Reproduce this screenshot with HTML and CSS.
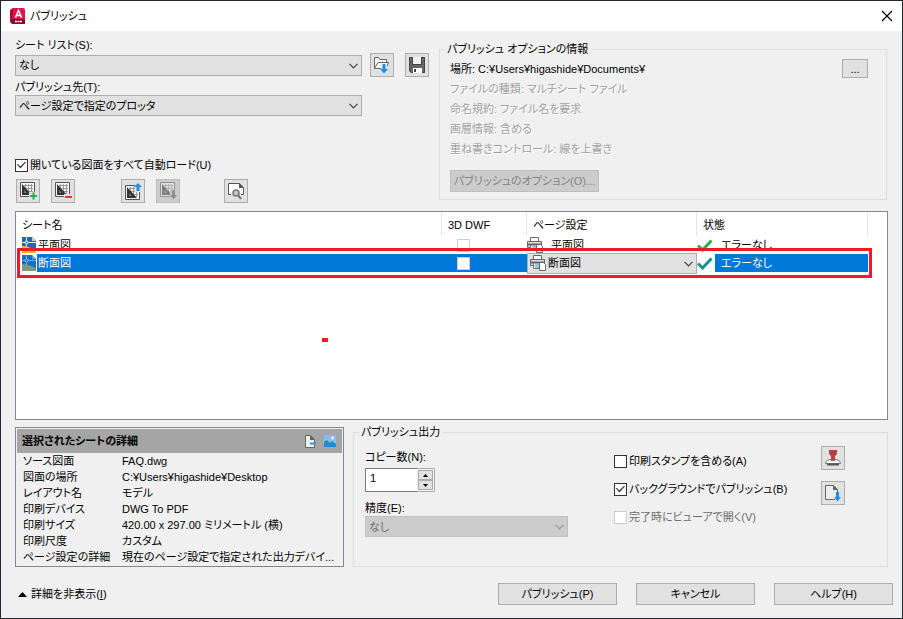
FILE: index.html
```html
<!DOCTYPE html>
<html lang="ja">
<head>
    <meta charset="UTF-8">
    <meta name="viewport" content="width=device-width, initial-scale=1.0">
    <title>パブリッシュ</title>
    <link rel="stylesheet" href="styles.css">
</head>
<body>
    <!-- 共通アイコン -->
    <svg class="symbols" aria-hidden="true">
        <symbol id="chevron" viewBox="0 0 9 6">
            <path d="M0.5 0.8L4.5 4.8L8.5 0.8" fill="none" stroke="currentColor" stroke-width="1.2"/>
        </symbol>
        <symbol id="sheet" viewBox="0 0 15 15">
            <path d="M.5 .5h14v14H.5z" fill="#f4f4f4" stroke="#555"/>
            <path d="M5.500 2v7M8.500 2v10M11.500 2v10M4 3.500h9M5 6.500h8M8 9.500h5" stroke="#999"/>
            <path d="M2 2l10 11H2z" fill="#333"/>
            <path d="M4 8l3 3H4z" fill="#777"/>
        </symbol>
        <symbol id="dwg" viewBox="0 0 14 16">
            <path d="M0 0h10l4 4v12H0z" fill="#2d66a8"/>
            <path d="M10 0v4h4z" fill="#b9cfe6"/>
            <path d="M0 9c5 0 9 2 14 4v3H0z" fill="#f5b81c"/>
            <path d="M4.500 0v10M0 5.500h14" stroke="#d5e7f7" stroke-width="1"/>
            <circle cx="4.500" cy="5.500" r="1.500" fill="#2d66a8" stroke="#fff"/>
        </symbol>
        <symbol id="dwg-selected" viewBox="0 0 14 16">
            <path d="M0 0h10l4 4v12H0z" fill="#176fc1"/>
            <path d="M10 0v4h4z" fill="#5da7e2"/>
            <path d="M0 9c5 0 9 2 14 4v3H0z" fill="#7b9a7d"/>
            <path d="M4.500 0v10M0 5.500h14" stroke="#6bb0ea" stroke-width="1"/>
            <circle cx="4.500" cy="5.500" r="1.500" fill="#176fc1" stroke="#7fbdf0"/>
        </symbol>
        <symbol id="printer" viewBox="0 0 16 16">
            <path d="M3.500 4.500v-4h8v4" fill="#fff" stroke="#666"/>
            <path d="M.5 4.500h14v6H.5z" fill="#ddd" stroke="#666"/>
            <path d="M1 7.500h13" stroke="#666" stroke-width="2"/>
            <path d="M3.500 8v5.500h6" fill="#fff" stroke="#777"/>
            <path d="M5 9h4v4H5z" fill="#8cc6f2"/>
            <path d="M9.500 7.500h4l2 2v6h-6z" fill="#fff" stroke="#666"/>
        </symbol>
        <symbol id="check" viewBox="0 0 16 13">
            <path d="M1 6.500L5.500 11L14.500 1.500" fill="none" stroke="currentColor" stroke-width="3"/>
        </symbol>
    </svg>

    <div class="dialog">
        <div class="title-bar">
            <svg class="app-icon" width="15" height="16" viewBox="0 0 15 16">
                <path d="M3 0h10a2 2 0 0 1 2 2v14H2V1z" fill="#e3124b"/>
                <path d="M3 0L0 2v12l2 2z" fill="#a10c38"/>
                <path d="M2 11h13v5H2z" fill="#7d0f31"/>
                <path d="M5.500 9.500L8.500 2.500L11.500 9.500M6.500 7.500h4" fill="none" stroke="#fff" stroke-width="1.600"/>
                <path d="M5 13.500h7" stroke="#fff" stroke-width="1.500" stroke-dasharray="2 .5"/>
            </svg>
            <h1>パブリッシュ</h1>
            <button class="close" aria-label="閉じる">
                <svg width="12" height="12" viewBox="0 0 12 12"><path d="M1 1l10 10M11 1L1 11" stroke="#000" stroke-width="1.200"/></svg>
            </button>
        </div>

        <div class="content">
            <div class="top">
                <div class="source">
                    <label class="label" for="sheetList">シート リスト(S):</label>
                    <div class="list-row">
                        <div class="select">
                            <select id="sheetList"><option>なし</option></select>
                            <svg class="arrow"><use href="#chevron"/></svg>
                        </div>
                        <button class="icon-button" aria-label="シート リストをロード">
                            <svg width="18" height="18" viewBox="0 0 18 18">
                                <path d="M1.500 12.500v-11h4l1.500 2h6.500v3" fill="#f5f5f5" stroke="#666"/>
                                <path d="M1.500 12.500L5 6.500h10.500l-2 6z" fill="#f5f5f5" stroke="#666"/>
                                <path d="M8 10h9v8H8z" fill="#e1e1e1"/>
                                <path d="M9.500 8h3v5h2.500l-4 4.500l-4-4.500h2.500z" fill="#1d8fea"/>
                            </svg>
                        </button>
                        <button class="icon-button save" aria-label="シート リストを保存">
                            <svg width="18" height="18" viewBox="0 0 18 18">
                                <path d="M1 1h16v16H3l-2-2z" fill="#666"/>
                                <path d="M1.500 1.500h15v15h-13l-2-2z" fill="none" stroke="#444"/>
                                <path d="M5 1h8v7H5z" fill="#f0f0f0"/>
                                <path d="M4.500 1v7.500h9V1" fill="none" stroke="#444"/>
                                <path d="M5 12h9v5H5z" fill="#fff"/>
                                <path d="M6 13h2v3H6z" fill="#444"/>
                            </svg>
                        </button>
                    </div>
                    <label class="label second" for="publishTo">パブリッシュ先(T):</label>
                    <div class="select">
                        <select id="publishTo"><option>ページ設定で指定のプロッタ</option></select>
                        <svg class="arrow"><use href="#chevron"/></svg>
                    </div>
                    <label class="check autoload"><input type="checkbox" checked>開いている図面をすべて自動ロード(U)</label>
                    <div class="toolbar">
                        <button class="icon-button" aria-label="シートを追加">
                            <svg width="18" height="18" viewBox="0 0 18 18">
                                <use href="#sheet" x="1" width="15" height="15"/>
                                <path d="M10 10h8v8h-8z" fill="#e1e1e1"/>
                                <path d="M11 14h7M14.500 10.500v7" stroke="#22b14c" stroke-width="2"/>
                            </svg>
                        </button>
                        <button class="icon-button" aria-label="シートを除去">
                            <svg width="18" height="18" viewBox="0 0 18 18">
                                <use href="#sheet" x="1" width="15" height="15"/>
                                <path d="M10 12h8v6h-8z" fill="#e1e1e1"/>
                                <path d="M11 15h7" stroke="#f03434" stroke-width="2"/>
                            </svg>
                        </button>
                        <button class="icon-button move" aria-label="シートを上に移動">
                            <svg width="18" height="18" viewBox="0 0 18 18">
                                <use href="#sheet" x="1" y="3" width="15" height="15"/>
                                <path d="M11 0h7v10h-7z" fill="#e1e1e1"/>
                                <path d="M14 1l4 4h-2.500v4h-3V5H10z" fill="#1d8fea"/>
                            </svg>
                        </button>
                        <button class="icon-button" aria-label="シートを下に移動" disabled>
                            <svg width="18" height="18" viewBox="0 0 18 18" opacity="0.5">
                                <use href="#sheet" x="1" width="15" height="15"/>
                                <path d="M11 8h7v10h-7z" fill="#ccc"/>
                                <path d="M13 8h3v5h2l-3.500 4.500L11 13h2z" fill="#555"/>
                            </svg>
                        </button>
                        <button class="icon-button preview" aria-label="プレビュー">
                            <svg width="18" height="18" viewBox="0 0 18 18">
                                <path d="M1.500 1.500h11l4 4v7h-15z" fill="#fff" stroke="#555"/>
                                <path d="M12 1v5h5z" fill="#555"/>
                                <path d="M4 11h10v5H4z" fill="#e1e1e1"/>
                                <circle cx="9" cy="11" r="3" fill="#c5c5c5" stroke="#777" stroke-width="1.500"/>
                                <path d="M11 13l3 4" stroke="#806b50" stroke-width="2"/>
                            </svg>
                        </button>
                    </div>
                </div>

                <fieldset class="options">
                    <legend>パブリッシュ オプションの情報</legend>
                    <div class="location">
                        <span>場所: C:¥Users¥higashide¥Documents¥</span>
                        <button class="browse">...</button>
                    </div>
                    <p>ファイルの種類: マルチシート ファイル</p>
                    <p>命名規約: ファイル名を要求</p>
                    <p>画層情報: 含める</p>
                    <p>重ね書きコントロール: 線を上書き</p>
                    <button class="options-button" disabled>パブリッシュのオプション(O)...</button>
                </fieldset>
            </div>

            <div class="sheets">
                <table>
                    <thead>
                        <tr>
                            <th>シート名</th>
                            <th class="col-dwf">3D DWF</th>
                            <th class="col-setup">ページ設定</th>
                            <th class="col-status">状態</th>
                        </tr>
                    </thead>
                    <tbody>
                        <tr>
                            <td><div class="cell name"><svg width="14" height="16"><use href="#dwg"/></svg><span>平面図</span></div></td>
                            <td><div class="cell dwf"><input type="checkbox" aria-label="平面図 3D DWF" disabled></div></td>
                            <td><div class="cell setup"><svg width="16" height="16"><use href="#printer"/></svg><span>平面図</span></div></td>
                            <td><div class="cell status"><svg width="16" height="13"><use href="#check"/></svg><span>エラーなし</span></div></td>
                        </tr>
                        <tr class="selected">
                            <td><div class="cell name"><svg width="14" height="16"><use href="#dwg-selected"/></svg><span>断面図</span></div></td>
                            <td class="fill"><div class="cell dwf"><input type="checkbox" aria-label="断面図 3D DWF" disabled></div></td>
                            <td>
                                <div class="cell">
                                    <div class="select page-setup">
                                        <svg class="printer" width="16" height="16"><use href="#printer"/></svg>
                                        <select aria-label="ページ設定"><option>断面図</option></select>
                                        <svg class="arrow"><use href="#chevron"/></svg>
                                    </div>
                                </div>
                            </td>
                            <td><div class="cell status"><svg width="16" height="13"><use href="#check"/></svg><span>エラーなし</span></div></td>
                        </tr>
                    </tbody>
                </table>
                <div class="highlight"></div>
                <div class="mark"></div>
            </div>

            <div class="bottom">
                <div class="details">
                    <div class="details-header">
                        <h2>選択されたシートの詳細</h2>
                        <svg width="13" height="13" viewBox="0 0 13 13">
                            <path d="M1.500 .5h5l4 4v8h-9z" fill="#eee" stroke="#666"/>
                            <path d="M6 0v5h5z" fill="#666"/>
                            <path d="M6 8.500h6" stroke="#2e9be8" stroke-width="2"/>
                        </svg>
                        <svg width="12" height="12" viewBox="0 0 12 12">
                            <path d="M0 0h12v12H0z" fill="#79c3f5"/>
                            <path d="M0 7l3-2 3 3 2-2 4 3v3H0z" fill="#2787cf"/>
                            <circle cx="8.500" cy="3" r="1.500" fill="#fff3a5"/>
                        </svg>
                    </div>
                    <dl>
                        <dt>ソース図面</dt><dd>FAQ.dwg</dd>
                        <dt>図面の場所</dt><dd>C:¥Users¥higashide¥Desktop</dd>
                        <dt>レイアウト名</dt><dd>モデル</dd>
                        <dt>印刷デバイス</dt><dd>DWG To PDF</dd>
                        <dt>印刷サイズ</dt><dd>420.00 x 297.00 ミリメートル (横)</dd>
                        <dt>印刷尺度</dt><dd>カスタム</dd>
                        <dt>ページ設定の詳細</dt><dd>現在のページ設定で指定された出力デバイ...</dd>
                    </dl>
                </div>

                <fieldset class="output">
                    <legend>パブリッシュ出力</legend>
                    <div class="output-body">
                        <div class="copies">
                            <label class="label" for="copies">コピー数(N):</label>
                            <div class="spinner">
                                <input type="text" id="copies" value="1">
                                <div class="spin-buttons">
                                    <button aria-label="増やす"><svg width="5" height="3"><path d="M0 3L2.500 0L5 3z"/></svg></button>
                                    <button aria-label="減らす"><svg width="5" height="3"><path d="M0 0L2.500 3L5 0z"/></svg></button>
                                </div>
                            </div>
                            <label class="label precision" for="precision">精度(E):</label>
                            <div class="select">
                                <select id="precision" disabled><option>なし</option></select>
                                <svg class="arrow"><use href="#chevron"/></svg>
                            </div>
                        </div>
                        <div class="checks">
                            <label class="check"><input type="checkbox">印刷スタンプを含める(A)</label>
                            <label class="check"><input type="checkbox" checked>バックグラウンドでパブリッシュ(B)</label>
                            <label class="check off"><input type="checkbox" disabled>完了時にビューアで開く(V)</label>
                        </div>
                        <div class="side-buttons">
                            <button class="icon-button" aria-label="印刷スタンプ設定">
                                <svg width="18" height="18" viewBox="0 0 18 18">
                                    <path d="M5 1h8v4l-2 2v4H7V7L5 5z" fill="#b93d42"/>
                                    <path d="M1.500 14.500c0-3 3-4 5.500-4v1h4v-1c2.500 0 5.500 1 5.500 4z" fill="#f5f5f5" stroke="#777"/>
                                    <path d="M3 15.500h12" stroke="#555" stroke-width="2"/>
                                </svg>
                            </button>
                            <button class="icon-button" aria-label="既定の出力">
                                <svg width="18" height="18" viewBox="0 0 18 18">
                                    <path d="M1.500 1.500h8l4 4v10h-12z" fill="#eee" stroke="#666"/>
                                    <path d="M9 1v5h5z" fill="#666"/>
                                    <path d="M11 9h6v8h-6z" fill="#e1e1e1"/>
                                    <path d="M12 8h3v5h2l-3.500 4.500L10 13h2z" fill="#1d8fea"/>
                                </svg>
                            </button>
                        </div>
                    </div>
                </fieldset>
            </div>
        </div>

        <div class="footer">
            <button class="toggle"><svg width="9" height="5"><path d="M0 5L4.500 0L9 5z"/></svg><span>詳細を非表示(<u>I</u>)</span></button>
            <button>パブリッシュ(P)</button>
            <button>キャンセル</button>
            <button>ヘルプ(H)</button>
        </div>
    </div>
</body>
</html>
```
FILE: styles.css
```css
* {
    box-sizing: border-box;
}
body {
    margin: 0;
    font-family: "Liberation Sans", "Noto Sans CJK JP", sans-serif;
    font-size: 11px;
    line-height: 16px;
    font-feature-settings: "palt";
    color: #000;
    background-color: #f0f0f0;
}
button, input, select {
    font: inherit;
    font-feature-settings: inherit;
    color: inherit;
    margin: 0;
}
button {
    height: 22px;
    padding: 0;
    border: 1px solid #adadad;
    background-color: #e1e1e1;
    white-space: nowrap;
}
button:disabled {
    background-color: #ccc;
    border-color: #bfbfbf;
    color: #838383;
}
h1, h2, p, dl, dd {
    margin: 0;
    font-size: 11px;
}
svg {
    display: block;
    flex: none;
}
.symbols {
    position: absolute;
    width: 0;
    height: 0;
}
.dialog {
    display: flex;
    flex-direction: column;
    min-height: 100vh;
    border: 1px solid #25272f;
}

/* タイトルバー */
.title-bar {
    display: flex;
    align-items: center;
    height: 30px;
    padding: 0 8px 0 9px;
    background-color: #fff;
}
.title-bar h1 {
    flex: 1;
    margin-left: 5px;
    font-weight: normal;
}
.close {
    padding: 0 1px;
    border: none;
    background: none;
}

.content {
    display: flex;
    flex-direction: column;
    flex: 1;
    padding: 0 14px;
}
.top {
    display: flex;
    align-items: flex-start;
}
.source {
    flex: 0 0 424px;
    padding-top: 6px;
}
.label {
    display: block;
}
.label.second {
    margin-top: 2px;
}
.list-row {
    display: flex;
    align-items: center;
}
.select {
    position: relative;
    width: 347px;
}
.select select {
    display: block;
    appearance: none;
    width: 100%;
    height: 21px;
    padding: 0 20px 0 3px;
    border: 1px solid #adadad;
    border-radius: 0;
    background-color: #e1e1e1;
}
.select select:disabled {
    background-color: #ccc;
    border-color: #bfbfbf;
    color: #6d6d6d;
    opacity: 1;
}
.arrow {
    position: absolute;
    top: 8px;
    right: 4px;
    width: 9px;
    height: 6px;
    color: #444;
    pointer-events: none;
}
select:disabled + .arrow {
    color: #999;
}
.icon-button {
    display: flex;
    align-items: center;
    justify-content: center;
    width: 24px;
    height: 24px;
}
.list-row .icon-button {
    margin-left: 8px;
}
.list-row .save {
    margin-left: 11px;
}
.check {
    display: flex;
    align-items: center;
    gap: 2px;
}
.check.off {
    color: #6d6d6d;
}
input[type="checkbox"] {
    appearance: none;
    display: flex;
    align-items: center;
    justify-content: center;
    flex: none;
    width: 13px;
    height: 13px;
    border: 1px solid #333;
    background-color: #fff;
}
input[type="checkbox"]:checked::before {
    content: "";
    width: 9px;
    height: 7px;
    background-color: #333;
    clip-path: polygon(0 44%, 10% 32%, 36% 72%, 92% 0, 100% 12%, 38% 100%);
}
input[type="checkbox"]:disabled {
    border-color: #ccc;
}
.autoload {
    margin-top: 41px;
}
.toolbar {
    display: flex;
    gap: 11px;
    margin-top: 6px;
    padding-left: 1px;
}
.toolbar .move {
    margin-left: 35px;
}
.toolbar .preview {
    margin-left: 33px;
}

/* グループ枠 */
fieldset {
    min-width: 0;
    margin: 0;
    border: 1px solid #dcdcdc;
}
legend {
    padding: 0 3px 0 2px;
}
.options {
    flex: 1;
    margin-top: 10px;
    margin-right: 1px;
    padding: 2px 18px 7px 10px;
}
.options legend {
    margin-left: -5px;
}
.location {
    display: flex;
    justify-content: space-between;
    height: 20px;
    line-height: 20px;
}
.browse {
    width: 26px;
    height: 19px;
    line-height: 16px;
}
.options p {
    line-height: 20px;
    color: #a0a0a0;
    text-shadow: 1px 1px 0 #fff;
}
.options-button {
    display: block;
    width: 149px;
    margin-top: 11px;
}

/* シート一覧 */
.sheets {
    position: relative;
    flex: 1;
    margin-top: 8px;
    padding-right: 19px;
    border: 1px solid #828790;
    background-color: #fff;
}
.sheets table {
    width: 100%;
    table-layout: fixed;
    border-collapse: separate;
    border-spacing: 0;
}
.sheets th {
    height: 24px;
    padding: 2px 6px 0;
    border-right: 1px solid #e5e5e5;
    font-weight: normal;
    text-align: left;
}
.sheets td {
    padding: 0;
}
.col-dwf {
    width: 85px;
}
.col-setup {
    width: 170px;
}
.col-status {
    width: 171px;
}
.cell {
    display: flex;
    align-items: center;
    height: 18px;
}
.cell.name {
    padding-left: 6px;
}
.cell.name span {
    flex: 1;
    margin-left: 1px;
    padding-left: 1px;
}
.cell.dwf {
    padding-left: 15px;
}
.cell.setup {
    gap: 8px;
}
.cell.status {
    color: #22b14c;
}
.cell.status span {
    flex: 1;
    margin-left: 2px;
    padding-left: 6px;
    color: #000;
}
.selected .cell.status {
    color: #15928f;
}
.selected .cell span {
    color: #fff;
    background-color: #0078d7;
    line-height: 18px;
}
.selected .fill {
    background-color: #0078d7;
}
.page-setup {
    width: 100%;
    margin: -2px 0;
}
.page-setup select {
    padding-left: 20px;
}
.page-setup .printer {
    position: absolute;
    top: 2px;
    left: 3px;
}
.highlight {
    position: absolute;
    top: 36px;
    left: 1px;
    right: 15px;
    height: 30px;
    border: 3px solid #ed1c24;
}
.mark {
    position: absolute;
    top: 126px;
    left: 306px;
    width: 6px;
    height: 4px;
    background-color: #ed1c24;
}

/* 下部 */
.bottom {
    display: flex;
    gap: 9px;
    margin-top: 4px;
}
.details {
    flex: 0 0 329px;
    min-width: 0;
    margin-top: 3px;
    padding: 1px;
    border: 1px solid #828790;
}
.details-header {
    display: flex;
    align-items: center;
    gap: 7px;
    height: 24px;
    padding: 0 6px 0 5px;
    background-color: #a5a5a5;
}
.details-header h2 {
    flex: 1;
}
.details dl {
    display: grid;
    grid-template-columns: 99px 1fr;
    padding-left: 6px;
}
.details dt, .details dd {
    white-space: nowrap;
}
.output {
    flex: 1;
    padding: 0 42px 0 11px;
}
.output legend {
    margin-left: -6px;
}
.output-body {
    display: flex;
    height: 125px;
}
.copies {
    flex: 0 0 249px;
    padding-top: 9px;
}
.copies .select {
    width: 203px;
}
.spinner {
    display: flex;
    width: 70px;
    height: 24px;
    margin-top: 3px;
    border: 1px solid #adadad;
}
.spinner input {
    flex: 1;
    min-width: 0;
    padding: 0 4px 4px;
    border: 1px solid #7a7a7a;
    border-right: none;
    margin: -1px 0 -1px -1px;
    background-color: #fff;
}
.spin-buttons {
    display: flex;
    flex-direction: column;
    padding: 1px;
}
.spin-buttons button {
    display: flex;
    align-items: center;
    justify-content: center;
    width: 15px;
    height: 10px;
}
.label.precision {
    margin-top: 8px;
}
.checks {
    display: flex;
    flex-direction: column;
    flex: 1;
    gap: 12px;
    padding-top: 13px;
}
.side-buttons {
    display: flex;
    flex-direction: column;
    gap: 11px;
    padding-top: 6px;
}

.footer {
    display: flex;
    align-items: center;
    gap: 19px;
    padding: 16px 9px 13px 17px;
}
.footer button {
    width: 119px;
}
.footer .toggle {
    display: flex;
    align-items: center;
    gap: 4px;
    margin-right: auto;
    border: none;
    background: none;
}
```
